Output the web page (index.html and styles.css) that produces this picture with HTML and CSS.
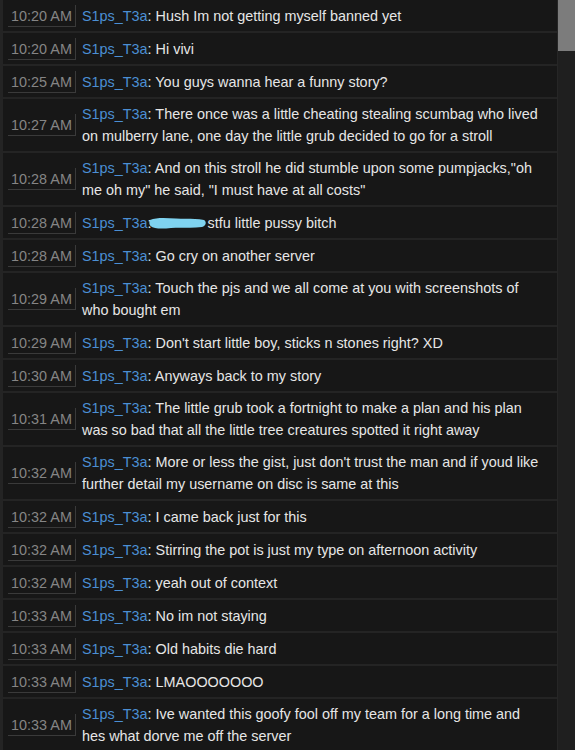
FILE: index.html
```html
<!DOCTYPE html>
<html>
<head>
<meta charset="utf-8">
<link rel="stylesheet" href="styles.css">
</head>
<body>
<div class="frame">
  <div class="log">
    <div class="row"><span class="ts">10:20 AM</span><div class="msg"><span class="name">S1ps_T3a</span>: Hush Im not getting myself banned yet</div></div>
    <div class="row"><span class="ts">10:20 AM</span><div class="msg"><span class="name">S1ps_T3a</span>: Hi vivi</div></div>
    <div class="row"><span class="ts">10:25 AM</span><div class="msg"><span class="name">S1ps_T3a</span>: You guys wanna hear a funny story?</div></div>
    <div class="row"><span class="ts">10:27 AM</span><div class="msg"><span class="name">S1ps_T3a</span>: There once was a little cheating stealing scumbag who lived on mulberry lane, one day the little grub decided to go for a stroll</div></div>
    <div class="row"><span class="ts">10:28 AM</span><div class="msg"><span class="name">S1ps_T3a</span>: And on this stroll he did stumble upon some pumpjacks,"oh me oh my" he said, "I must have at all costs"</div></div>
    <div class="row"><span class="ts">10:28 AM</span><div class="msg"><span class="name">S1ps_T3a</span>:<svg class="scribble" width="58" height="14" viewBox="0 0 58 14"><path d="M1 4 C8 1 18 2 27 2.5 C37 3 46 2 55 4 C58 6 57 10 53 11 C43 12.5 32 11 22 12 C13 13 5 13 1.5 10 C0 8 0 6 1 4 Z" fill="#7fd3f0"/></svg>stfu little pussy bitch</div></div>
    <div class="row"><span class="ts">10:28 AM</span><div class="msg"><span class="name">S1ps_T3a</span>: Go cry on another server</div></div>
    <div class="row"><span class="ts">10:29 AM</span><div class="msg"><span class="name">S1ps_T3a</span>: Touch the pjs and we all come at you with screenshots of who bought em</div></div>
    <div class="row"><span class="ts">10:29 AM</span><div class="msg"><span class="name">S1ps_T3a</span>: Don't start little boy, sticks n stones right? XD</div></div>
    <div class="row"><span class="ts">10:30 AM</span><div class="msg"><span class="name">S1ps_T3a</span>: Anyways back to my story</div></div>
    <div class="row"><span class="ts">10:31 AM</span><div class="msg"><span class="name">S1ps_T3a</span>: The little grub took a fortnight to make a plan and his plan was so bad that all the little tree creatures spotted it right away</div></div>
    <div class="row"><span class="ts">10:32 AM</span><div class="msg"><span class="name">S1ps_T3a</span>: More or less the gist, just don't trust the man and if youd like further detail my username on disc is same at this</div></div>
    <div class="row"><span class="ts">10:32 AM</span><div class="msg"><span class="name">S1ps_T3a</span>: I came back just for this</div></div>
    <div class="row"><span class="ts">10:32 AM</span><div class="msg"><span class="name">S1ps_T3a</span>: Stirring the pot is just my type on afternoon activity</div></div>
    <div class="row"><span class="ts">10:32 AM</span><div class="msg"><span class="name">S1ps_T3a</span>: yeah out of context</div></div>
    <div class="row"><span class="ts">10:33 AM</span><div class="msg"><span class="name">S1ps_T3a</span>: No im not staying</div></div>
    <div class="row"><span class="ts">10:33 AM</span><div class="msg"><span class="name">S1ps_T3a</span>: Old habits die hard</div></div>
    <div class="row"><span class="ts">10:33 AM</span><div class="msg"><span class="name">S1ps_T3a</span>: LMAOOOOOOO</div></div>
    <div class="row"><span class="ts">10:33 AM</span><div class="msg"><span class="name">S1ps_T3a</span>: Ive wanted this goofy fool off my team for a long time and hes what dorve me off the server</div></div>
  </div>
  <div class="scrollbar"><div class="thumb"></div></div>
</div>
</body>
</html>
```
FILE: styles.css
```css
html, body {
  margin: 0;
  padding: 0;
  background: #121212;
  overflow: hidden;
}
.frame {
  display: flex;
  height: 750px;
  font-family: "Liberation Sans", Arial, sans-serif;
  font-size: 14.4px;
}
.log {
  flex: 1;
  padding-left: 3px;
  display: flex;
  flex-direction: column;
  gap: 2px;
  background: #242424;
}
.row {
  display: flex;
  align-items: center;
  background: #171717;
  min-height: 31px;
  padding: 4px 0;
  box-sizing: border-box;
  flex: none;
}
.ts {
  flex: none;
  width: 68px;
  margin-left: 5px;
  margin-right: 6px;
  height: 22px;
  line-height: 22px;
  text-align: center;
  color: #858585;
  border-right: 1px solid #3a3a3a;
  border-bottom: 1px solid #3a3a3a;
  box-sizing: border-box;
  white-space: nowrap;
}
.msg {
  flex: 1;
  color: #e6e6e6;
  line-height: 22px;
  padding-right: 14px;
}
.name {
  color: #4b8fd4;
}
.scribble {
  vertical-align: -2px;
  margin: 0 1px 0 -3px;
}
.scrollbar {
  flex: none;
  width: 17px;
  background: #1f1f1f;
  border-left: 1px solid #262626;
}
.thumb {
  height: 51px;
  background: #7c7c7c;
}
```
